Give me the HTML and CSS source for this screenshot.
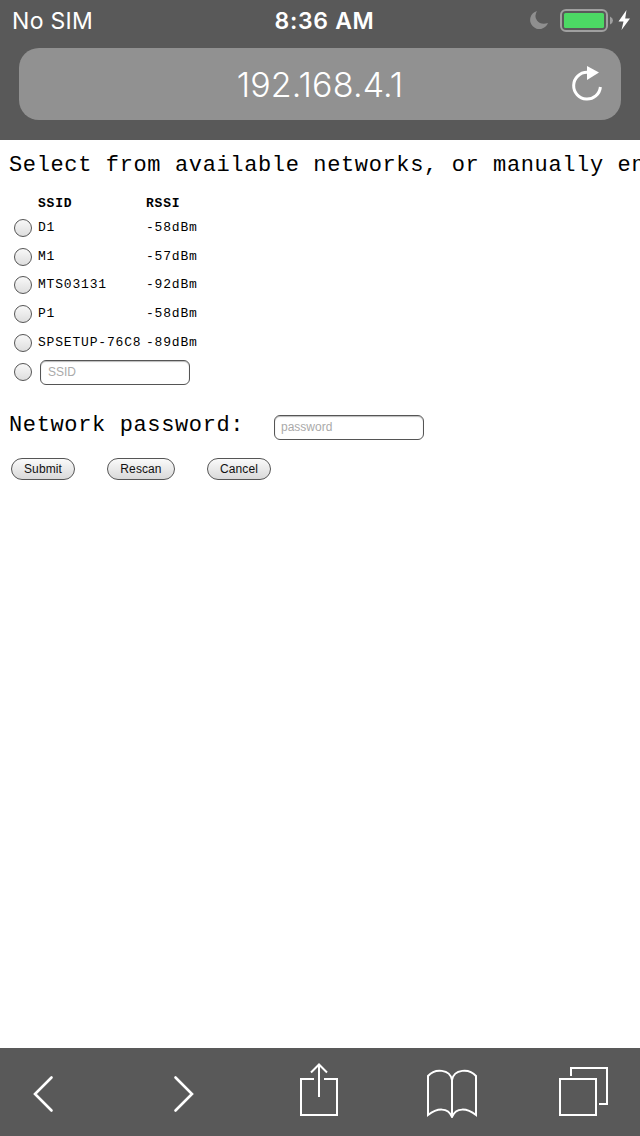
FILE: index.html
```html
<!DOCTYPE html>
<html lang="en">
<head>
<meta charset="utf-8">
<title>192.168.4.1</title>
<link rel="stylesheet" href="styles.css">
</head>
<body>
<header class="chrome">
  <div class="status">
    <span class="carrier">No SIM</span>
    <span class="clock">8:36 AM</span>
    <svg class="indicators" width="110" height="40" viewBox="530 0 110 40">
      <path fill="#8f8f8f" d="M537 11A9.200 9.200 0 1 0 548 23Q541 25.500 537 20.500Q533.800 16 537 11Z"/>
      <rect x="561" y="10" width="46" height="21" rx="5" fill="none" stroke="#a0a0a0" stroke-width="2"/>
      <rect x="564" y="13" width="40" height="15" rx="1.5" fill="#4cd964"/>
      <path fill="#a0a0a0" d="M610 16.500Q613 18 613 20.500Q613 23 610 24.500Z"/>
      <path fill="#fff" d="M626.500 10L618.500 21.500H623.500L621.500 30L630 18.500H625.200Z"/>
    </svg>
  </div>
  <div class="address">
    <span class="url">192.168.4.1</span>
    <svg class="reload" width="34" height="40" viewBox="570 64 34 40">
      <path d="M589 72.300H587A13.400 13.400 0 1 0 600.400 87" fill="none" stroke="#fff" stroke-width="3"/>
      <path d="M587 66L599 72.500L587 80Z" fill="#fff"/>
    </svg>
  </div>
</header>
<main class="page">
  <p class="lead">Select from available networks, or manually en</p>
  <form class="form">
    <div class="networks">
      <div class="row head"><i></i><b>SSID</b><b>RSSI</b></div>
      <label class="row"><input class="radio" type="radio" name="n"><span>D1</span><span>-58dBm</span></label>
      <label class="row"><input class="radio" type="radio" name="n"><span>M1</span><span>-57dBm</span></label>
      <label class="row"><input class="radio" type="radio" name="n"><span>MTS03131</span><span>-92dBm</span></label>
      <label class="row"><input class="radio" type="radio" name="n"><span>P1</span><span>-58dBm</span></label>
      <label class="row"><input class="radio" type="radio" name="n"><span>SPSETUP-76C8</span><span>-89dBm</span></label>
      <div class="row manual"><input class="radio" type="radio" name="n"><input class="field" type="text" placeholder="SSID"></div>
    </div>
    <div class="password"><span class="caption">Network password:</span><input class="field" type="text" placeholder="password"></div>
    <div class="actions">
      <button class="btn submit" type="button">Submit</button>
      <button class="btn rescan" type="button">Rescan</button>
      <button class="btn cancel" type="button">Cancel</button>
    </div>
  </form>
</main>
<footer class="toolbar">
  <svg class="back" width="24" height="40" viewBox="31 1074 24 40"><path d="M51.500 1077.500L35 1094L51.500 1110.500"/></svg>
  <svg class="forward" width="24" height="40" viewBox="172 1074 24 40"><path d="M175.500 1077.500L192 1094L175.500 1110.500"/></svg>
  <svg class="thin share" width="40" height="56" viewBox="299 1062 40 56"><path d="M314 1079H301V1115H337V1079H324M319 1097V1065M311 1072.500L319 1064.500L327 1072.500"/></svg>
  <svg class="thin book" width="52" height="56" viewBox="426 1062 52 56"><path d="M452 1080C450 1069 435 1068 428 1076V1115C437 1108 448 1107 452 1117C456 1107 467 1108 476 1115V1076C469 1068 454 1069 452 1080V1117"/></svg>
  <svg class="thin tabs" width="52" height="56" viewBox="558 1062 52 56"><path d="M560 1079H596V1115H560ZM571 1076V1068H607V1104H599"/></svg>
</footer>
</body>
</html>
```
FILE: styles.css
```css
* { box-sizing: border-box; }
body {
  display: flex;
  flex-direction: column;
  width: 640px;
  height: 1136px;
  margin: 0;
  overflow: hidden;
  background: #fff;
  color: #000;
}
.chrome {
  height: 140px;
  padding: 0 19px;
  background: #595959;
  color: #fff;
  font-family: Inter, sans-serif;
}
.status {
  display: grid;
  grid-template-columns: 200px 1fr 200px;
  align-items: start;
  height: 40px;
  margin: 0 -19px 8px;
  font-size: 23px;
  line-height: 42px;
}
.carrier { padding-left: 12px; letter-spacing: 0.3px; }
.clock { padding-left: 9px; text-align: center; font-weight: 600; letter-spacing: 0.7px; }
.indicators { justify-self: end; }
.address {
  display: grid;
  grid-template-columns: 51px 1fr 51px;
  align-items: start;
  height: 72px;
  border-radius: 20px;
  background: #919191;
}
.reload { margin-top: 16px; }
.url {
  grid-column: 2;
  text-align: center;
  font-size: 34px;
  font-weight: 350;
  line-height: 73px;
  letter-spacing: 0.15px;
}
.page {
  flex: 1;
  min-width: 0;
  padding: 11px 0 0 8px;
  overflow: hidden;
  font-family: "Liberation Mono", monospace;
}
.lead, .caption {
  margin: 0;
  padding-left: 1px;
  font-size: 22px;
  line-height: 30px;
  letter-spacing: 0.63px;
  white-space: nowrap;
}
.lead { overflow: hidden; }
.networks { padding: 10px 0 0 6px; font-size: 13px; letter-spacing: 0.820px; }
.row {
  display: grid;
  grid-template-columns: 18px 104px 60px;
  column-gap: 6px;
  align-items: center;
  height: 28.600px;
  white-space: nowrap;
}
.row > :nth-child(3) { margin-left: -2px; }
.row span { padding-bottom: 1px; }
.head { height: 23px; padding-top: 1px; }
.manual { height: 31px; grid-template-columns: 18px 150px; column-gap: 8px; }
.radio {
  appearance: none;
  width: 18px;
  height: 18px;
  margin: 0;
  border: 1px solid #555;
  border-radius: 50%;
  background: linear-gradient(#f8f8f8, #dedede);
}
.field {
  width: 150px;
  height: 25px;
  margin: 0;
  padding: 0 7px 1px;
  border: 1px solid #555;
  border-radius: 6px;
  background: #fff;
  box-shadow: inset 0 1px 1px #bbb;
  font: 12px "Liberation Sans", sans-serif;
}
.field::placeholder { color: #aaa; opacity: 1; }
.password { display: flex; align-items: center; height: 30px; margin-top: 25px; }
.password .caption { width: 266px; padding-bottom: 4px; }
.password .field { padding-left: 6px; }
.actions { display: flex; gap: 32px; padding: 15px 0 0 3px; }
.btn {
  height: 22px;
  padding: 0;
  border: 1px solid #555;
  border-radius: 11px;
  background: linear-gradient(#fafafa, #d9d9d9);
  color: #111;
  font: 12px/20px "Liberation Sans", sans-serif;
  letter-spacing: 0.1px;
}
.submit { width: 64px; }
.rescan { width: 68px; }
.cancel { width: 64px; }
.toolbar {
  display: flex;
  align-items: center;
  height: 88px;
  padding: 0 30px 0 31px;
  background: #595959;
}
.toolbar svg { flex: none; fill: none; stroke: #fff; stroke-width: 2.600; stroke-linecap: round; }
.back, .forward { margin-top: 4px; }
.forward { margin-left: 117px; }
.share { margin-left: 103px; }
.book { margin-left: 87px; }
.tabs { margin-left: 80px; }
.toolbar .thin { margin-bottom: 4px; stroke-width: 2; stroke-linecap: butt; }
```
